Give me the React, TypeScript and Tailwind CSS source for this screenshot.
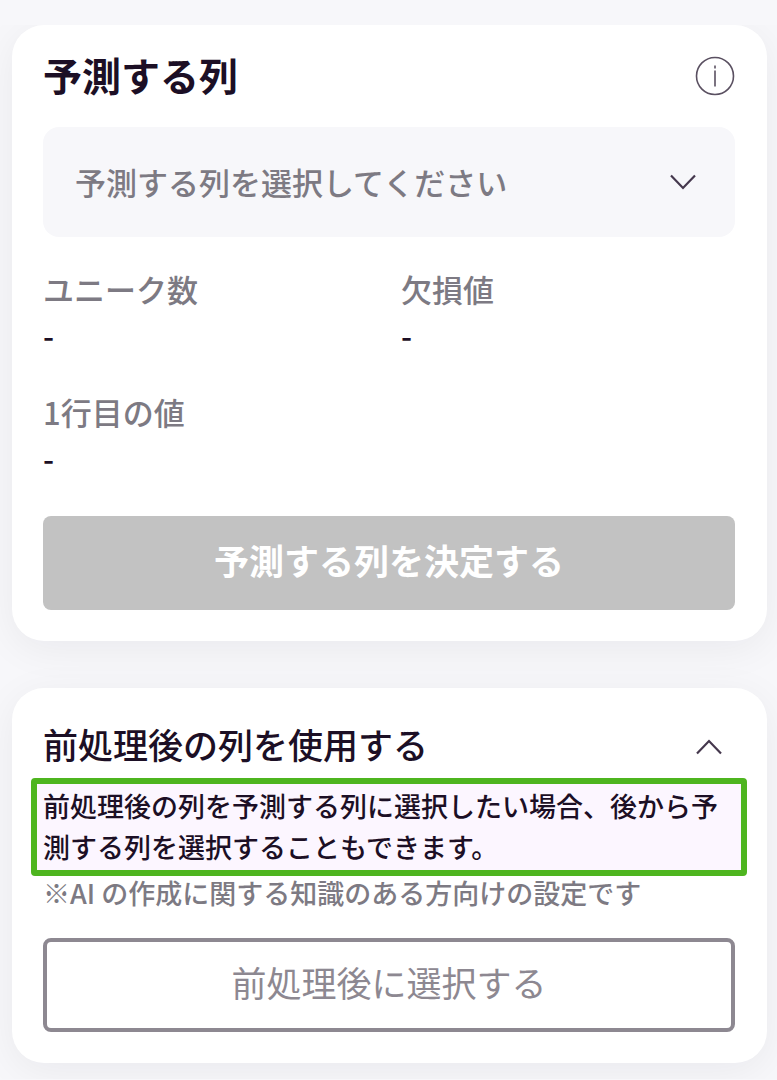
import { useState } from "react"
import type { ReactNode } from "react"

interface StatProps {
  label: string
  value: string
}

function Stat({ label, value }: StatProps) {
  return (
    <div className="text-[31px] leading-[46px] font-medium">
      <dt className="text-[#7d7a83]">{label}</dt>
      <dd className="text-[#1c0f25]">{value}</dd>
    </div>
  )
}

function Card({ children }: { children: ReactNode }) {
  return (
    <section className="rounded-[32px] bg-white pl-[31px] pr-8 pb-[31px] shadow-[0_8px_40px_rgba(20,20,30,0.06)]">
      {children}
    </section>
  )
}

function InfoIcon() {
  return (
    <svg className="size-10" viewBox="0 0 40 40" fill="none" stroke="#5a5061" strokeWidth="1.6">
      <circle cx="20" cy="20" r="18.5" />
      <path d="M20 14.5v16" />
      <path d="M20 9.5v3" />
    </svg>
  )
}

function Chevron({ className }: { className: string }) {
  return (
    <svg className={className} viewBox="0 0 28 16" fill="none" stroke="#45384d" strokeWidth="2.2">
      <path d="M2 1.5L14 14L26 1.5" />
    </svg>
  )
}

export default function App() {
  const [column, setColumn] = useState("")
  const [open, setOpen] = useState(true)

  return (
    <div className="min-h-screen bg-[#f7f7fa] pt-[25px] font-['Noto_Sans_CJK_JP',sans-serif] text-[#1c0f25]">
      <main className="flex flex-col gap-[47px] overflow-hidden pl-3 pr-[10px] pb-4">
        <Card>
          <div className="flex items-center justify-between pt-6">
            <h2 className="pb-1 text-[39px] leading-[50px] font-bold">予測する列</h2>
            <button type="button" aria-label="予測する列について">
              <InfoIcon />
            </button>
          </div>

          <div className="mt-6 grid items-center">
            <select
              aria-label="予測する列"
              value={column}
              onChange={(e) => setColumn(e.target.value)}
              className="col-start-1 row-start-1 h-[110px] w-full appearance-none rounded-2xl bg-[#f7f7fa] pl-8 pr-20 text-[31px] font-medium text-[#7d7a83]"
            >
              <option value="">予測する列を選択してください</option>
            </select>
            <Chevron className="pointer-events-none col-start-1 row-start-1 mr-[38px] h-4 w-7 justify-self-end" />
          </div>

          <dl className="mt-[29px] grid grid-cols-2 gap-x-6 gap-y-[31px]">
            <Stat label="ユニーク数" value="-" />
            <Stat label="欠損値" value="-" />
            <Stat label="1行目の値" value="-" />
          </dl>

          <button
            type="button"
            disabled={!column}
            className="mt-[35px] h-[94px] w-full rounded-lg bg-[#c2c2c2] pb-[6px] text-[35px] font-bold text-white"
          >
            予測する列を決定する
          </button>
        </Card>

        <Card>
          <h2 className="pt-[34px]">
            <button
              type="button"
              aria-expanded={open}
              onClick={() => setOpen(!open)}
              className="flex w-full items-center justify-between pr-3 text-[35px] leading-[44px] font-medium"
            >
              <span className="pb-[6px]">前処理後の列を使用する</span>
              <Chevron className={open ? "h-4 w-7 rotate-180" : "h-4 w-7"} />
            </button>
          </h2>

          {open && (
            <div className="text-[27px] font-medium">
              <p className="-mr-3 -ml-3 mt-[6px] rounded-sm border-6 border-[#4eb51f] bg-[#fcf6ff] pt-[1px] pb-[3px] pl-[6px] leading-[41px]">
                前処理後の列を予測する列に選択したい場合、後から予測する列を選択することもできます。
              </p>
              <p className="text-[#7d7a83] leading-[34px]">※AI の作成に関する知識のある方向けの設定です</p>
              <button
                type="button"
                className="mt-7 h-[94px] w-full rounded-lg border-4 border-[#8d8891] pb-[6px] text-[35px] font-normal text-[#8d8891]"
              >
                前処理後に選択する
              </button>
            </div>
          )}
        </Card>
      </main>
    </div>
  )
}
